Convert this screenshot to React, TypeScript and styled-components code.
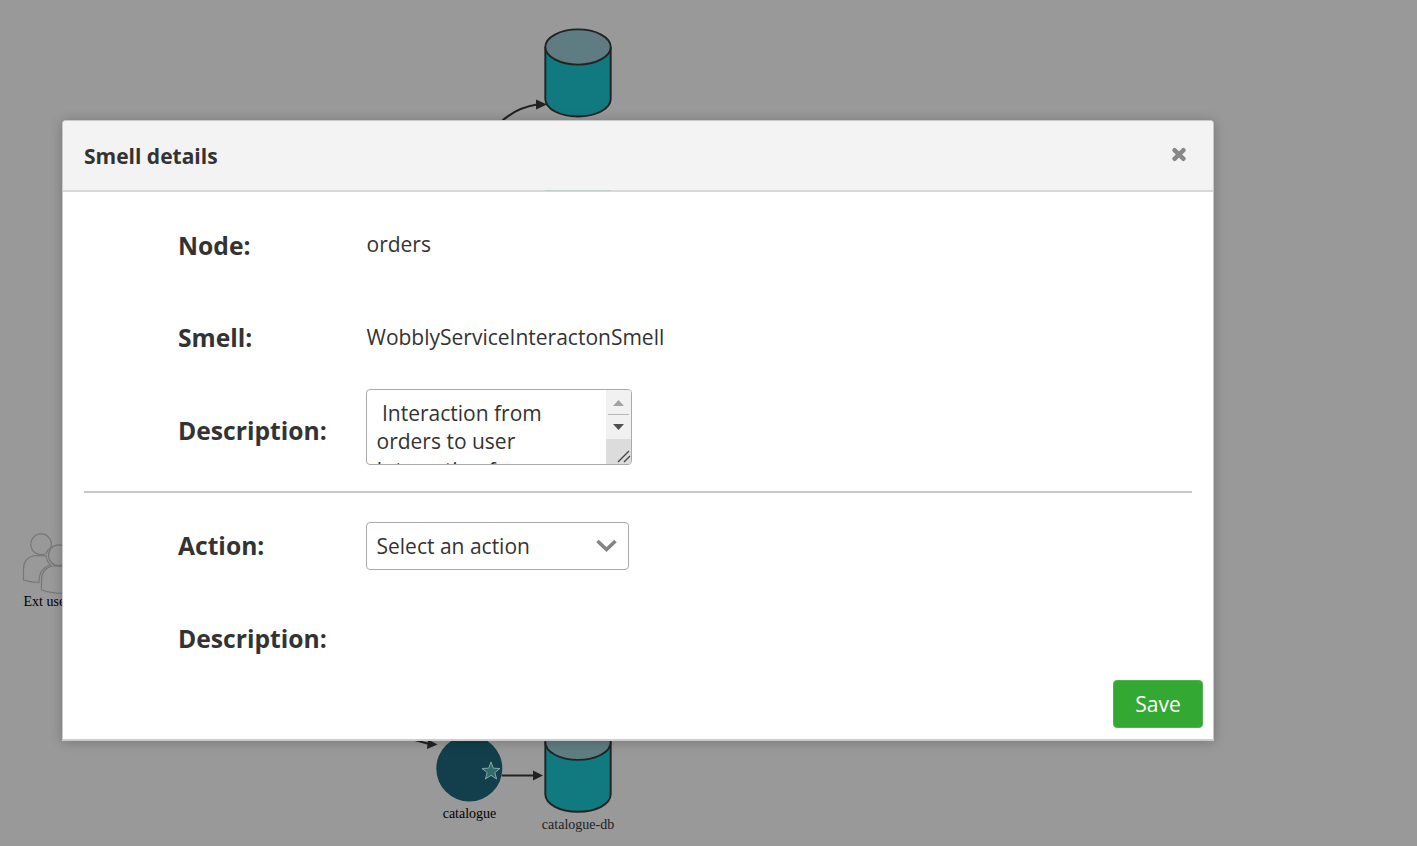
import React from 'react';
import styled, { createGlobalStyle } from 'styled-components';

const GlobalStyle = createGlobalStyle`
  * { box-sizing: border-box; }
  body { margin: 0; background: #999; overflow: hidden; font-family: "Open Sans", sans-serif; color: #333; }
`;

const Page = styled.main`
  position: relative;
  width: 1417px;
  height: 846px;
  background: #999;
`;

const Diagram = styled.svg`
  display: block;
  font-family: "Liberation Serif", serif;
  font-size: 14px;
`;

const Dialog = styled.section`
  position: absolute;
  left: 62px;
  top: 120px;
  width: 1152px;
  height: 621px;
  display: flex;
  flex-direction: column;
  background: #fff;
  border: 1px solid #c8c8c8;
  border-bottom: 2px solid #ccc;
  border-radius: 4px 4px 0 0;
  box-shadow: 0 1px 12px rgba(0, 0, 0, 0.23);
`;

const Header = styled.header`
  height: 71px;
  flex: none;
  display: flex;
  align-items: center;
  justify-content: space-between;
  padding: 0 26px 0 21px;
  background: #f3f3f3;
  border-bottom: 2px solid #d8d8d8;
  border-radius: 3px 3px 0 0;
`;

const Title = styled.h1`
  margin: 1px 0 0;
  font-size: 21px;
  font-weight: 700;
  line-height: 30px;
`;

const CloseButton = styled.button`
  display: flex;
  margin: 0 0 2px;
  padding: 0;
  border: 0;
  background: none;
`;

const EdgeTint = styled.div`
  position: absolute;
  left: 482px;
  top: 69px;
  width: 66px;
  height: 1px;
  background: #c5cdcb;
`;

const Row = styled.div<{ $height: number; $top?: number; $bottom?: number }>`
  display: grid;
  grid-template-columns: 188px 1fr;
  align-items: center;
  flex: none;
  height: ${(p) => p.$height}px;
  padding: ${(p) => p.$top ?? 0}px 0 ${(p) => p.$bottom ?? 0}px 115px;
`;

const Label = styled.div`
  font-size: 24.65px;
  font-weight: 700;
  line-height: 34px;
`;

const Value = styled.div<{ $lift: number }>`
  font-size: 21px;
  line-height: 30px;
  margin-top: -${(p) => p.$lift}px;
  padding-left: 0.5px;
`;

const DescriptionBox = styled.div`
  display: flex;
  width: 266px;
  height: 76px;
  margin-top: -8px;
  overflow: hidden;
  border: 1px solid #aaa;
  border-radius: 4px;
`;

const DescriptionText = styled.div`
  flex: 1;
  padding: 9px 0 0 9.5px;
  font-size: 21px;
  line-height: 28px;
  white-space: pre;
`;

const NextEntry = styled.div`
  padding-top: 1px;
`;

const Select = styled.div`
  display: flex;
  align-items: center;
  justify-content: space-between;
  width: 263px;
  height: 48px;
  margin-top: 1px;
  padding: 0 10px 1px 9.5px;
  border: 1px solid #aaa;
  border-radius: 4px;
  font-size: 21px;
`;

const Divider = styled.hr`
  flex: none;
  width: 1108px;
  height: 2px;
  margin: 0 0 0 21px;
  border: 0;
  background: #c8c8c8;
`;

const Footer = styled.footer`
  display: flex;
  justify-content: flex-end;
  padding-right: 10px;
`;

const SaveButton = styled.button`
  width: 90px;
  height: 48px;
  padding: 0 0 1px;
  border: 1px solid #4fb34f;
  border-radius: 4px;
  background: #33a933;
  color: #fff;
  font: 21px "Open Sans", sans-serif;
`;

function Database({ y }: { y: number }) {
  return (
    <g transform={`translate(545 ${y})`} stroke="#222" strokeWidth="1.9">
      <path d="M0.3 18V70C0.5 80 15 87.5 33 87.5S65.5 80 65.7 70V18" fill="#117a80" />
      <ellipse cx="33" cy="18" rx="32.7" ry="17.6" fill="#5f7c82" />
    </g>
  );
}

export default function App() {
  return (
    <>
      <GlobalStyle />
      <Page>
        <Diagram width="1417" height="846" viewBox="0 0 1417 846">
          <Database y={29} />
          <path d="M500 123Q515 108 537 104.5" fill="none" stroke="#222" strokeWidth="2" />
          <path d="M536 99.5L547 104.5L536 109.5Z" fill="#222" />
          <g fill="none" stroke="#777" strokeWidth="1.2">
            <path d="M46.5 553A10.3 10.3 0 1 1 51 547Q47 550 46.5 553Z" />
            <path d="M35 555.5C27 557 23.5 562 23.5 569V580Q31 582.5 39 582.5C39 573 43 567 50.5 565Q46.5 561 46 555.8Z" />
            <circle cx="59" cy="555.3" r="10.5" />
            <path d="M52 566C45 568 41.5 573 41.5 580V590Q51 593.5 66 593.5V566Z" />
          </g>
          <text x="23.5" y="606">Ext users</text>
          <path d="M415 740L429 744" stroke="#222" strokeWidth="2" />
          <path d="M428 739.5L437.5 744.5L427 749Z" fill="#222" />
          <circle cx="469.3" cy="768.5" r="33" fill="#123f4b" />
          <path d="M491 762L493.3 768.2L500 768.5L494.8 772.6L496.6 779L491 775.3L485.4 779L487.2 772.6L482 768.5L488.7 768.2Z" fill="#2f6b68" stroke="#86a6a8" strokeWidth="1" />
          <path d="M502 775.5H534" stroke="#222" strokeWidth="2" />
          <path d="M533 770.5L543 775.5L533 780.5Z" fill="#222" />
          <Database y={724.3} />
          <text x="469.5" y="818" textAnchor="middle">catalogue</text>
          <text x="578" y="829" textAnchor="middle" fill="#222">catalogue-db</text>
        </Diagram>
        <Dialog role="dialog" aria-label="Smell details">
          <Header>
            <Title>Smell details</Title>
            <CloseButton aria-label="Close">
              <svg width="16" height="16" viewBox="0 0 16 16">
                <path d="M3.5 3.2L12.5 11.8M12.5 3.2L3.5 11.8" stroke="#888" strokeWidth="4.5" strokeLinecap="round" />
              </svg>
            </CloseButton>
            <EdgeTint />
          </Header>
          <Row $height={99} $top={8}>
            <Label>Node:</Label>
            <Value $lift={4}>orders</Value>
          </Row>
          <Row $height={93} $top={1}>
            <Label>Smell:</Label>
            <Value $lift={2}>WobblyServiceInteractonSmell</Value>
          </Row>
          <Row $height={107} $bottom={14}>
            <Label>Description:</Label>
            <DescriptionBox>
              <DescriptionText>
                {' Interaction from\norders to user'}
                <NextEntry>Interaction from</NextEntry>
              </DescriptionText>
              <svg width="25" height="74" viewBox="0 0 25 74">
                <path d="M0 0H25V49H0Z" fill="#f1f1f1" />
                <path d="M0 49H25V74H0Z" fill="#dcdcdc" />
                <path d="M2 24.5H23" stroke="#b8b8b8" />
                <path d="M7 16H18L12.5 10Z" fill="#a3a3a3" />
                <path d="M7 34H18L12.5 40Z" fill="#505050" />
                <path d="M12 72L23 61M18 72L24 66" stroke="#444" strokeWidth="1.4" />
              </svg>
            </DescriptionBox>
          </Row>
          <Divider />
          <Row $height={105}>
            <Label>Action:</Label>
            <Select>
              <span>Select an action</span>
              <svg width="23" height="16" viewBox="0 0 23 16">
                <path d="M2.5 3L11.5 11.5L20.5 3" fill="none" stroke="#858585" strokeWidth="3.6" />
              </svg>
            </Select>
          </Row>
          <Row $height={82} $bottom={1}>
            <Label>Description:</Label>
          </Row>
          <Footer>
            <SaveButton>Save</SaveButton>
          </Footer>
        </Dialog>
      </Page>
    </>
  );
}
